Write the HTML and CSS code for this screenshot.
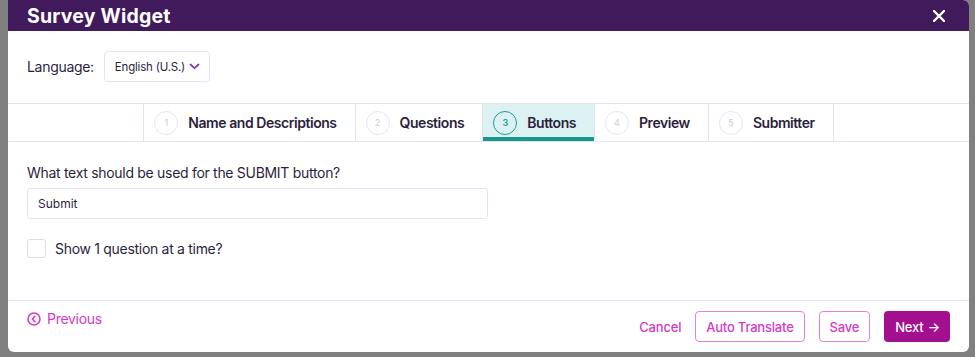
FILE: index.html
```html
<!DOCTYPE html>
<html lang="en">
<head>
    <meta charset="UTF-8">
    <meta name="viewport" content="width=device-width, initial-scale=1.0">
    <title>Survey Widget</title>
    <link rel="stylesheet" href="styles.css">
</head>
<body>
    <div class="modal">
        <div class="modal-header">
            <h1>Survey Widget</h1>
            <button class="close-btn" aria-label="Close">
                <svg width="12" height="12" viewBox="0 0 12 12">
                    <path d="M1 1 L11 11 M11 1 L1 11" stroke="#fff" stroke-width="2.4" stroke-linecap="round"/>
                </svg>
            </button>
        </div>

        <div class="language-row">
            <label>Language:</label>
            <div class="select">
                <span>English (U.S.)</span>
                <svg width="11" height="7" viewBox="0 0 11 7">
                    <path d="M1.5 1.5 L5.5 5.2 L9.5 1.5" fill="none" stroke="#7b3fae" stroke-width="1.8" stroke-linecap="round" stroke-linejoin="round"/>
                </svg>
            </div>
        </div>

        <div class="steps">
            <div class="step"><span class="num">1</span>Name and Descriptions</div>
            <div class="step"><span class="num">2</span>Questions</div>
            <div class="step active"><span class="num">3</span>Buttons</div>
            <div class="step"><span class="num">4</span>Preview</div>
            <div class="step"><span class="num">5</span>Submitter</div>
        </div>

        <div class="modal-body">
            <p class="question">What text should be used for the SUBMIT button?</p>
            <input type="text" class="text-input" value="Submit">
            <label class="check-row">
                <span class="checkbox"></span>
                Show 1 question at a time?
            </label>
        </div>

        <div class="modal-footer">
            <a class="prev-link" href="#">
                <svg width="14" height="14" viewBox="0 0 14 14">
                    <circle cx="7" cy="7" r="6" fill="none" stroke="#d63ac6" stroke-width="1.6"/>
                    <path d="M8 4.3 L5.4 7 L8 9.7" fill="none" stroke="#d63ac6" stroke-width="1.6" stroke-linecap="round" stroke-linejoin="round"/>
                </svg>
                Previous
            </a>
            <div class="actions">
                <button class="link-btn">Cancel</button>
                <button class="outline-btn">Auto Translate</button>
                <button class="outline-btn">Save</button>
                <button class="primary-btn">Next <span class="arrow">&rarr;</span></button>
            </div>
        </div>
    </div>
</body>
</html>
```

FILE: styles.css
```css
body {
    margin: 0;
    background-color: #808080;
    font-family: Inter, "Noto Sans", sans-serif;
    color: #2b1f3d;
    letter-spacing: -0.3px;
}

.modal {
    margin-left: 8px;
    width: 961px;
    height: 352px;
    background-color: #fff;
    border-radius: 0 6px 6px 6px;
    overflow: hidden;
    display: flex;
    flex-direction: column;
}

.modal-header {
    height: 31px;
    flex-shrink: 0;
    background-color: #411a5c;
    display: flex;
    align-items: center;
    justify-content: space-between;
    padding: 0 24px 0 19px;
}

.modal-header h1 {
    margin: 0;
    color: #fff;
    font-size: 19.5px;
    font-weight: 700;
    letter-spacing: 0.2px;
}

.close-btn {
    background: none;
    border: none;
    padding: 0;
    display: flex;
    cursor: pointer;
}

.language-row {
    display: flex;
    align-items: center;
    gap: 10px;
    padding: 20px 19px 0;
    font-size: 14px;
}

.select {
    height: 29px;
    width: 85px;
    padding: 0 9px 0 10px;
    border: 1px solid #e2e4f6;
    border-radius: 4px;
    display: flex;
    align-items: center;
    justify-content: space-between;
    font-size: 11.5px;
    letter-spacing: -0.2px;
}

.steps {
    margin-top: 21px;
    height: 37px;
    flex-shrink: 0;
    border-top: 1px solid #e2e4f6;
    border-bottom: 1px solid #e2e4f6;
    display: flex;
    justify-content: center;
}

.step {
    display: flex;
    align-items: center;
    gap: 10px;
    padding: 0 18px 0 10px;
    border-left: 1px solid #e2e4f6;
    font-size: 14px;
    font-weight: 600;
    letter-spacing: -0.45px;
    white-space: nowrap;
}

.step:last-child {
    border-right: 1px solid #e2e4f6;
}

.num {
    width: 22px;
    height: 22px;
    border: 1px solid #e3e6f8;
    border-radius: 50%;
    display: flex;
    align-items: center;
    justify-content: center;
    font-size: 9px;
    font-weight: 400;
    letter-spacing: 0;
    color: #c9cbe0;
}

.step.active {
    background-color: #dcf2f2;
    box-shadow: inset 0 -4px 0 #16968c;
}

.step.active .num {
    border: 1.5px solid #1f9b93;
    color: #1f9b93;
    font-weight: 600;
}

.modal-body {
    padding: 22px 19px 0;
    flex: 1;
}

.question {
    margin: 0 0 7px;
    font-size: 14px;
    line-height: 17px;
}

.text-input {
    display: block;
    width: 461px;
    height: 31px;
    box-sizing: border-box;
    padding: 0 10px;
    border: 1px solid #e2e4f6;
    border-radius: 3px;
    font-family: inherit;
    font-size: 12px;
    color: #2b1f3d;
    outline: none;
}

.check-row {
    display: flex;
    align-items: center;
    gap: 9px;
    margin-top: 20px;
    font-size: 14px;
}

.checkbox {
    width: 17px;
    height: 17px;
    border: 1px solid #dcdde8;
    border-radius: 3px;
}

.modal-footer {
    height: 52px;
    flex-shrink: 0;
    box-sizing: border-box;
    border-top: 1px solid #e2e4f6;
    display: flex;
    justify-content: space-between;
    align-items: flex-start;
    padding: 10px 19px 0;
}

.prev-link {
    display: flex;
    align-items: center;
    gap: 6px;
    color: #d63ac6;
    text-decoration: none;
    font-size: 14px;
    line-height: 15px;
}

.actions {
    display: flex;
    gap: 14px;
    align-items: center;
}

.actions button {
    height: 31px;
    font-family: inherit;
    font-size: 13px;
    font-weight: 500;
    letter-spacing: -0.2px;
    border-radius: 4px;
    cursor: pointer;
}

.link-btn {
    background: none;
    border: none;
    color: #d63ac6;
    padding: 0;
}

.outline-btn {
    background: #fff;
    border: 1px solid #e680d8;
    color: #d63ac6;
    padding: 0 10px;
}

.primary-btn {
    background-color: #a3108f;
    border: none;
    color: #fff;
    font-weight: 600;
    padding: 0 10px 0 11px;
}

.arrow {
    margin-left: 1px;
}
```
